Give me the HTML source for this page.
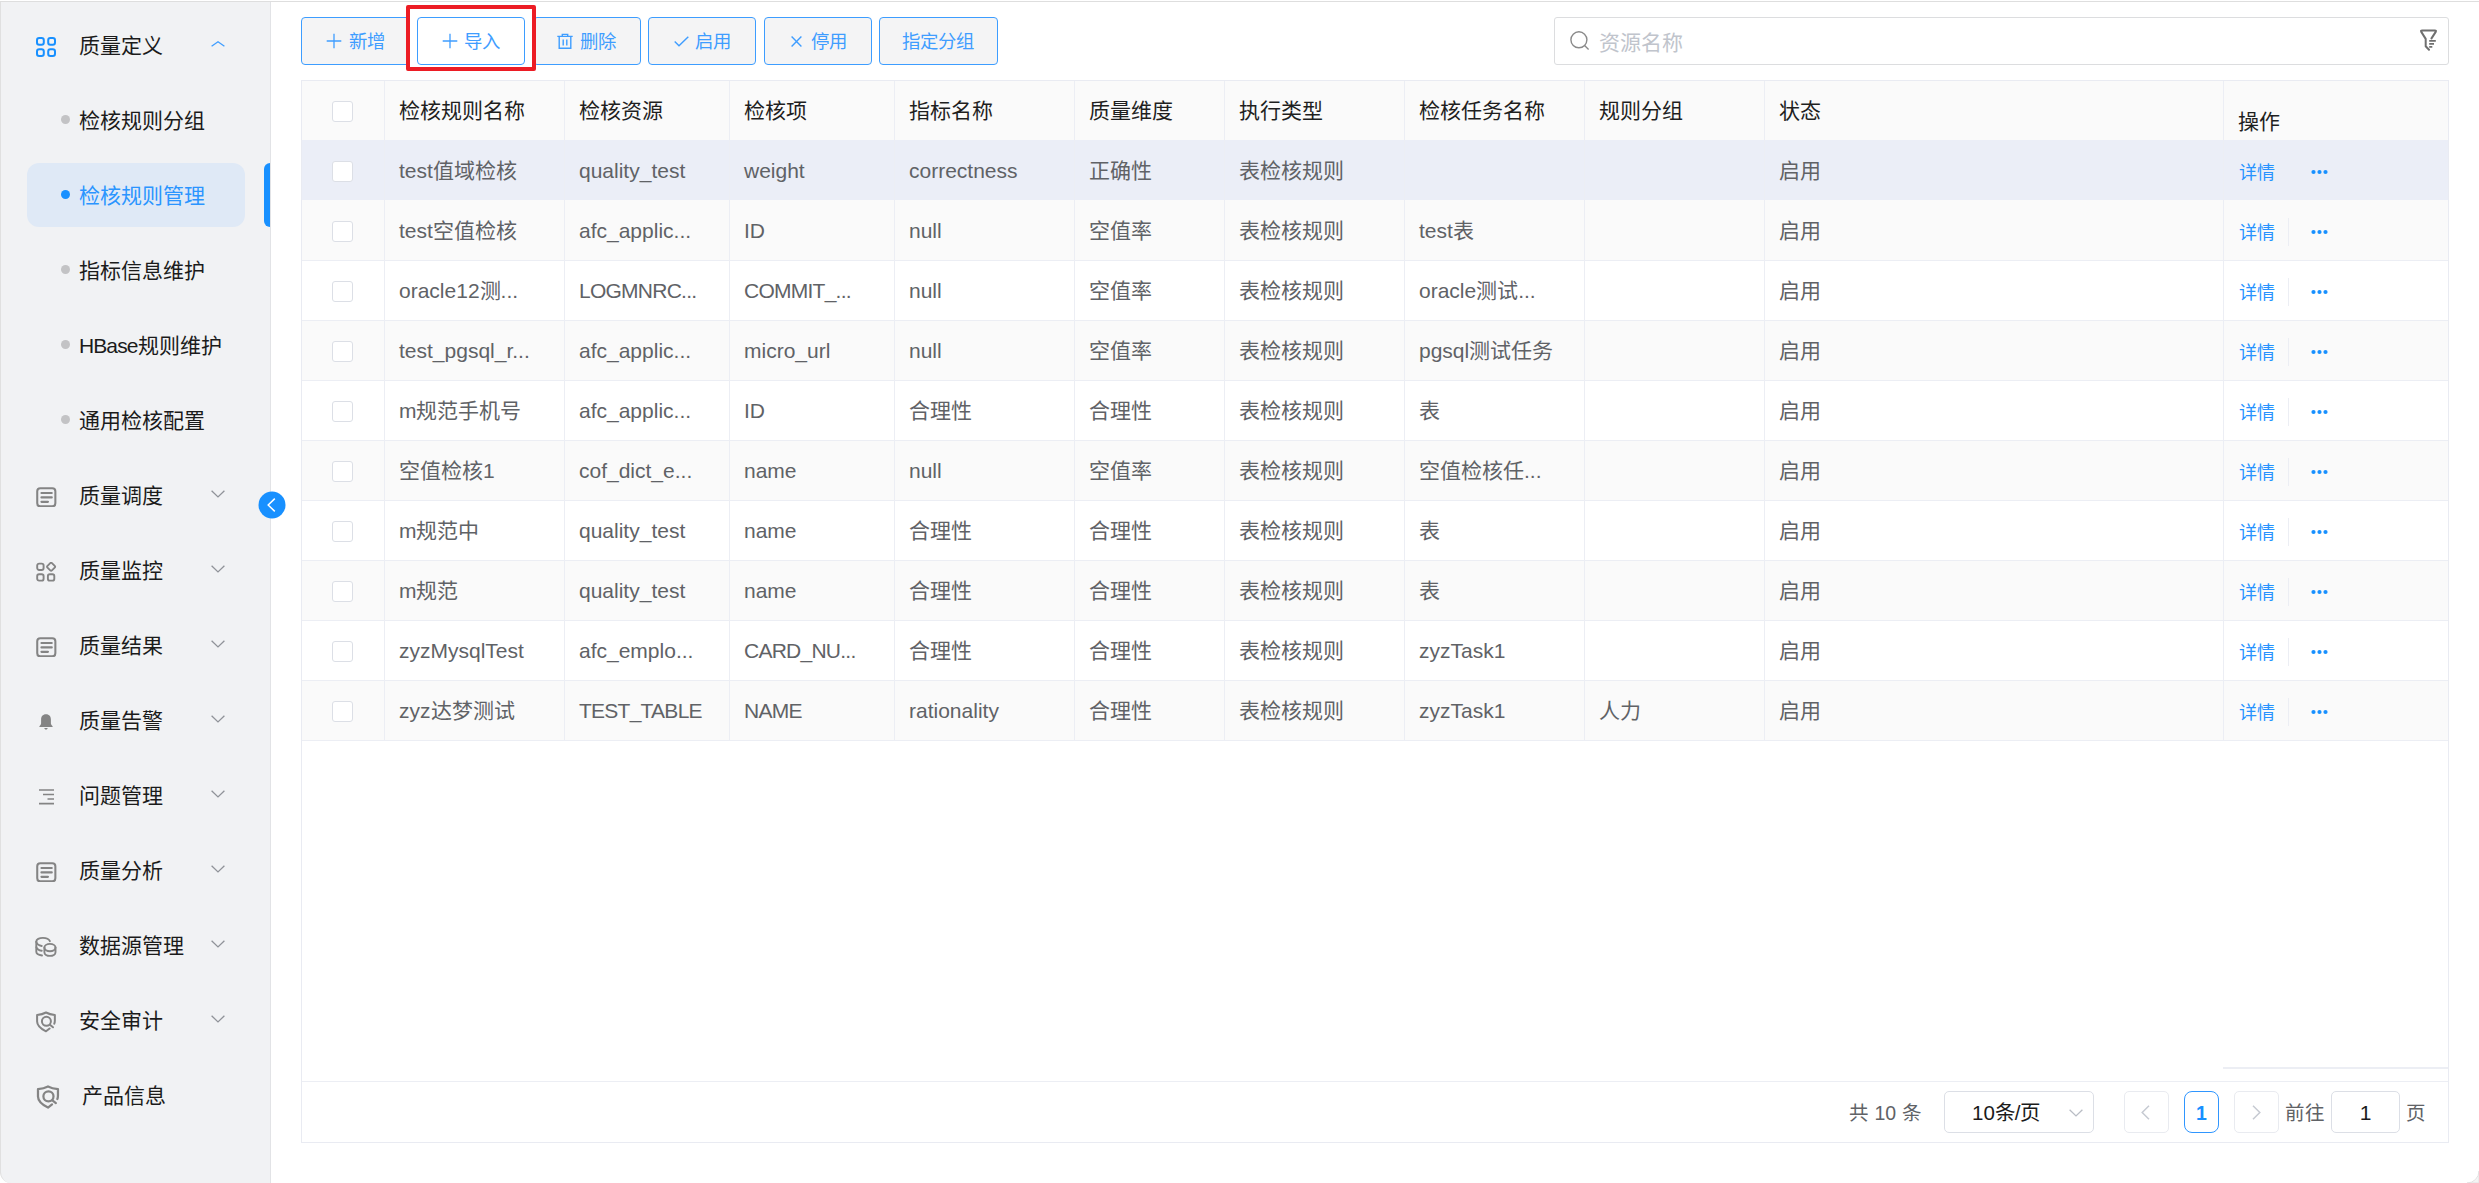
<!DOCTYPE html>
<html lang="zh-CN"><head><meta charset="utf-8"><title>检核规则管理</title>
<style>
*{box-sizing:border-box;margin:0;padding:0}
html,body{width:2479px;height:1183px;overflow:hidden;background:#fff}
body{position:relative;font-family:"Liberation Sans",sans-serif;font-size:21px;color:#606266}
.abs{position:absolute}
.side{left:0;top:2px;width:271px;height:1181px;background:#f1f2f4;border-left:1px solid #e0e0e0;border-right:1.5px solid #e2e3e6;border-bottom-left-radius:11px}
.topline{left:0;top:1px;width:2479px;height:1px;background:#dedede}
.mi{left:79px;height:30px;line-height:30px;font-size:21px;color:#1b1b1b;white-space:nowrap}
.dot{left:61px;width:9px;height:9px;border-radius:50%;background:#c3c3c5}
.btn{top:17px;height:48px;border:1.6px solid #3d9dff;border-radius:4px;background:#f4f4f5;color:#3f9dff;font-size:18.4px;line-height:46px;white-space:nowrap}
.btn span{position:absolute;top:1.3px}
.cell{height:60px;line-height:60px;white-space:nowrap;font-size:21px;color:#606266}
.hd{color:#1f1f1f;font-size:21px}
.vline{width:1.4px;background:#eceef4}
.hline{height:1.5px;background:#eceef4}
.cb{width:20.5px;height:20.5px;border:1.5px solid #dcdfe6;border-radius:3px;background:#fff;left:332px}
.lnk{color:#2893ff;font-size:18px;left:2239px;height:60px;line-height:60px}
.pg{font-size:19.5px;color:#606266;white-space:nowrap;height:42px;line-height:42px;top:1092.2px}
.box{border:1.5px solid #dcdfe6;border-radius:5px;background:#fff}
</style></head><body>
<div class="abs topline"></div>
<div class="abs side"></div>

<div class="abs" style="left:27px;top:163px;width:218px;height:64px;border-radius:12px;background:#dfe9f6"></div>
<div class="abs" style="left:264px;top:163px;width:6px;height:64px;border-radius:6px 0 0 6px;background:#1890ff"></div>
<div class="abs mi" style="top:31.2px;left:79px;color:#1b1b1b">质量定义</div>
<div class="abs mi" style="top:106.2px;left:79px;color:#1b1b1b">检核规则分组</div>
<div class="abs dot" style="top:115.4px;background:#c3c3c5"></div>
<div class="abs mi" style="top:181.2px;left:79px;color:#2b95ff">检核规则管理</div>
<div class="abs dot" style="top:190.4px;background:#1890ff"></div>
<div class="abs mi" style="top:256.2px;left:79px;color:#1b1b1b">指标信息维护</div>
<div class="abs dot" style="top:265.4px;background:#c3c3c5"></div>
<div class="abs mi" style="top:331.2px;left:79px;color:#1b1b1b"><span style="letter-spacing:-0.9px">HBase</span>规则维护</div>
<div class="abs dot" style="top:340.4px;background:#c3c3c5"></div>
<div class="abs mi" style="top:406.2px;left:79px;color:#1b1b1b">通用检核配置</div>
<div class="abs dot" style="top:415.4px;background:#c3c3c5"></div>
<div class="abs mi" style="top:481.2px;left:79px;color:#1b1b1b">质量调度</div>
<div class="abs mi" style="top:556.2px;left:79px;color:#1b1b1b">质量监控</div>
<div class="abs mi" style="top:631.2px;left:79px;color:#1b1b1b">质量结果</div>
<div class="abs mi" style="top:706.2px;left:79px;color:#1b1b1b">质量告警</div>
<div class="abs mi" style="top:781.2px;left:79px;color:#1b1b1b">问题管理</div>
<div class="abs mi" style="top:856.2px;left:79px;color:#1b1b1b">质量分析</div>
<div class="abs mi" style="top:931.2px;left:79px;color:#1b1b1b">数据源管理</div>
<div class="abs mi" style="top:1006.2px;left:79px;color:#1b1b1b">安全审计</div>
<div class="abs mi" style="top:1081.2px;left:82.2px;color:#1b1b1b">产品信息</div>
<svg class="abs" style="left:36px;top:37px" width="20" height="20" viewBox="0 0 20 20" fill="none"><rect x="1" y="1" width="6.8" height="6.8" rx="2.2" stroke="#1890ff" stroke-width="2"/><rect x="1" y="12.2" width="6.8" height="6.8" rx="2.2" stroke="#1890ff" stroke-width="2"/><rect x="12.2" y="1" width="6.8" height="6.8" rx="2.2" stroke="#1890ff" stroke-width="2"/><rect x="12.2" y="12.2" width="6.8" height="6.8" rx="2.2" stroke="#1890ff" stroke-width="2"/></svg>
<svg class="abs" style="left:211.3px;top:41px" width="14" height="6" viewBox="0 0 14 6" fill="none"><path d="M0.6 5.3L7 0.8L13.4 5.3" stroke="#409eff" stroke-width="1.3"/></svg>
<svg class="abs" style="left:36.1px;top:486.7px" width="20.6" height="20.6" viewBox="0 0 20 20" fill="none"><rect x="1.2" y="1.2" width="17.6" height="17.6" rx="3" stroke="#848484" stroke-width="2"/><path d="M5.3 5.8H15.3M5.3 10.1H15.3M5.3 14.4H11.6" stroke="#848484" stroke-width="2.1" stroke-linecap="round"/></svg>
<svg class="abs" style="left:35.6px;top:561.6px" width="21" height="21" viewBox="0 0 21 21" fill="none"><rect x="1.2" y="1.6" width="6.4" height="6.4" rx="1.9" stroke="#848484" stroke-width="1.9"/><rect x="1.2" y="12.2" width="6.4" height="6.4" rx="1.9" stroke="#848484" stroke-width="1.9"/><rect x="11.9" y="12.2" width="6.4" height="6.4" rx="1.9" stroke="#848484" stroke-width="1.9"/><rect x="11.95" y="1.65" width="6.3" height="6.3" rx="1.2" transform="rotate(45 15.1 4.8)" stroke="#848484" stroke-width="1.9"/></svg>
<svg class="abs" style="left:36.1px;top:636.7px" width="20.6" height="20.6" viewBox="0 0 20 20" fill="none"><rect x="1.2" y="1.2" width="17.6" height="17.6" rx="3" stroke="#848484" stroke-width="2"/><path d="M5.3 5.8H15.3M5.3 10.1H15.3M5.3 14.4H11.6" stroke="#848484" stroke-width="2.1" stroke-linecap="round"/></svg>
<svg class="abs" style="left:39px;top:714px" width="14" height="16" viewBox="0 0 14 16" fill="none"><path d="M7 0.3C10.4 0.3 11.9 2.7 11.9 5.6V9.2C11.9 10.4 12.6 11.2 13.6 12.3V13.1H0.4V12.3C1.4 11.2 2.1 10.4 2.1 9.2V5.6C2.1 2.7 3.6 0.3 7 0.3Z" fill="#848484"/><path d="M5.3 14h3.4c0 0.9-0.7 1.5-1.7 1.5s-1.7-0.6-1.7-1.5Z" fill="#848484"/></svg>
<svg class="abs" style="left:38.5px;top:789px" width="15" height="16" viewBox="0 0 15 16" fill="none"><path d="M0 1H15M4 5.5H15M8.5 10H15M0 14.6H15" stroke="#848484" stroke-width="1.6"/></svg>
<svg class="abs" style="left:36.1px;top:861.7px" width="20.6" height="20.6" viewBox="0 0 20 20" fill="none"><rect x="1.2" y="1.2" width="17.6" height="17.6" rx="3" stroke="#848484" stroke-width="2"/><path d="M5.3 5.8H15.3M5.3 10.1H15.3M5.3 14.4H11.6" stroke="#848484" stroke-width="2.1" stroke-linecap="round"/></svg>
<svg class="abs" style="left:30px;top:930px" width="32" height="32" viewBox="0 0 32 32"><path d="M6.3 11.6C6.3 9.3 9.2 7.85 12.9 7.85C16.3 7.85 19 9.1 19.9 11.2" stroke="#848484" stroke-width="1.9" stroke-linecap="round" fill="none"/><path d="M6.3 11.6V21.8C6.3 23.7 8.6 25 12 25.5" stroke="#848484" stroke-width="1.9" stroke-linecap="round" fill="none"/><path d="M6.4 12.3C7 14.2 9 15.5 11.7 16M6.4 17.2C7 19.1 9 20.3 11.7 20.8" stroke="#848484" stroke-width="1.9" stroke-linecap="round" fill="none"/><ellipse cx="19.95" cy="17.55" rx="5.55" ry="3.65" stroke="#848484" stroke-width="1.9" stroke-linecap="round" fill="none"/><path d="M14.4 17.55V22.2C14.4 24.3 16.9 25.9 19.95 25.9S25.5 24.3 25.5 22.2V17.55" stroke="#848484" stroke-width="1.9" stroke-linecap="round" fill="none"/></svg>
<svg class="abs" style="left:30px;top:1005px" width="32.0" height="32.0" viewBox="0 0 32 32"><path d="M19.6 23.5L16 26.3C10.3 23.4 7.1 20.6 7.1 16.4V9.9C10.6 9.6 13.4 8.9 16 7.5C18.6 8.9 21.4 9.6 24.85 9.9V15.5C24.85 16.7 24.7 17.7 24.3 18.7" stroke="#848484" stroke-width="2" stroke-linecap="round" stroke-linejoin="round" fill="none"/><circle cx="16.4" cy="16.3" r="4.5" stroke="#848484" stroke-width="2" stroke-linecap="round" stroke-linejoin="round" fill="none"/><path d="M19.9 19.8L23 22.3" stroke="#848484" stroke-width="2" stroke-linecap="round" stroke-linejoin="round" fill="none"/></svg>
<svg class="abs" style="left:30px;top:1077.9px" width="36.0" height="36.0" viewBox="0 0 32 32"><path d="M19.6 23.5L16 26.3C10.3 23.4 7.1 20.6 7.1 16.4V9.9C10.6 9.6 13.4 8.9 16 7.5C18.6 8.9 21.4 9.6 24.85 9.9V15.5C24.85 16.7 24.7 17.7 24.3 18.7" stroke="#848484" stroke-width="2" stroke-linecap="round" stroke-linejoin="round" fill="none"/><circle cx="16.4" cy="16.3" r="4.5" stroke="#848484" stroke-width="2" stroke-linecap="round" stroke-linejoin="round" fill="none"/><path d="M19.9 19.8L23 22.3" stroke="#848484" stroke-width="2" stroke-linecap="round" stroke-linejoin="round" fill="none"/></svg>
<svg class="abs" style="left:210.6px;top:489.8px" width="14" height="8" viewBox="0 0 14 8" fill="none"><path d="M0.6 0.7L7 6.9L13.4 0.7" stroke="#909399" stroke-width="1.3"/></svg>
<svg class="abs" style="left:210.6px;top:564.8px" width="14" height="8" viewBox="0 0 14 8" fill="none"><path d="M0.6 0.7L7 6.9L13.4 0.7" stroke="#909399" stroke-width="1.3"/></svg>
<svg class="abs" style="left:210.6px;top:639.8px" width="14" height="8" viewBox="0 0 14 8" fill="none"><path d="M0.6 0.7L7 6.9L13.4 0.7" stroke="#909399" stroke-width="1.3"/></svg>
<svg class="abs" style="left:210.6px;top:714.8px" width="14" height="8" viewBox="0 0 14 8" fill="none"><path d="M0.6 0.7L7 6.9L13.4 0.7" stroke="#909399" stroke-width="1.3"/></svg>
<svg class="abs" style="left:210.6px;top:789.8px" width="14" height="8" viewBox="0 0 14 8" fill="none"><path d="M0.6 0.7L7 6.9L13.4 0.7" stroke="#909399" stroke-width="1.3"/></svg>
<svg class="abs" style="left:210.6px;top:864.8px" width="14" height="8" viewBox="0 0 14 8" fill="none"><path d="M0.6 0.7L7 6.9L13.4 0.7" stroke="#909399" stroke-width="1.3"/></svg>
<svg class="abs" style="left:210.6px;top:939.8px" width="14" height="8" viewBox="0 0 14 8" fill="none"><path d="M0.6 0.7L7 6.9L13.4 0.7" stroke="#909399" stroke-width="1.3"/></svg>
<svg class="abs" style="left:210.6px;top:1014.8px" width="14" height="8" viewBox="0 0 14 8" fill="none"><path d="M0.6 0.7L7 6.9L13.4 0.7" stroke="#909399" stroke-width="1.3"/></svg>
<svg class="abs" style="left:257.9px;top:490.9px" width="28" height="28" viewBox="0 0 28 28" fill="none"><circle cx="14" cy="14" r="13.5" fill="#1890ff"/><path d="M16.8 7.6L10.2 14L16.8 20.4" stroke="#fff" stroke-width="1.5"/></svg>
<div class="abs btn" style="left:301px;width:110px"><span style="left:47px">新增</span></div>
<div class="abs btn" style="left:533px;width:108px"><span style="left:46px">删除</span></div>
<div class="abs btn" style="left:648px;width:108px"><span style="left:46px">启用</span></div>
<div class="abs btn" style="left:764px;width:108px"><span style="left:46px">停用</span></div>
<div class="abs btn" style="left:879px;width:119px"><span style="left:22px">指定分组</span></div>
<div class="abs" style="left:406.3px;top:5.2px;width:129.7px;height:66px;border:4px solid #ec1c24;border-radius:2px;background:#fff"></div>
<div class="abs btn" style="left:417px;width:108px;background:#fff"><span style="left:46px">导入</span></div>
<svg class="abs" style="left:325.5px;top:33.4px" width="16" height="16" viewBox="0 0 16 16" fill="none"><path d="M8 0.7V15.3M0.7 8H15.3" stroke="#3f9dff" stroke-width="1.3"/></svg>
<svg class="abs" style="left:441.5px;top:33.4px" width="16" height="16" viewBox="0 0 16 16" fill="none"><path d="M8 0.7V15.3M0.7 8H15.3" stroke="#3f9dff" stroke-width="1.3"/></svg>
<svg class="abs" style="left:557px;top:33px" width="16" height="16" viewBox="0 0 16 16" fill="none"><path d="M0.3 3.4H15.7M5.3 3.4V1.4H10.7V3.4M2.2 3.4V15.2H13.8V3.4M6.2 6.6V12.4M9.8 6.6V12.4" stroke="#3f9dff" stroke-width="1.4"/></svg>
<svg class="abs" style="left:673.5px;top:35.8px" width="15" height="11" viewBox="0 0 15 11" fill="none"><path d="M0.7 5.6L5 9.8L14.3 0.7" stroke="#3f9dff" stroke-width="1.4"/></svg>
<svg class="abs" style="left:790.8px;top:36.2px" width="11" height="11" viewBox="0 0 11 11" fill="none"><path d="M0.6 0.6L10.4 10.4M10.4 0.6L0.6 10.4" stroke="#3f9dff" stroke-width="1.4"/></svg>
<div class="abs box" style="left:1554px;top:17px;width:895px;height:48px;border-color:#dcdddf;border-radius:3px"></div>
<div class="abs" style="left:1599px;top:27.8px;font-size:21px;line-height:30px;color:#c0c4cc">资源名称</div>
<svg class="abs" style="left:1570px;top:30.5px" width="20" height="20" viewBox="0 0 20 20" fill="none"><circle cx="8.9" cy="8.8" r="8" stroke="#8a8a8a" stroke-width="1.4"/><path d="M14.6 14.6L18.6 18.4" stroke="#8a8a8a" stroke-width="1.4"/></svg>
<svg class="abs" style="left:2420px;top:28px" width="18" height="24" viewBox="0 0 18 24" fill="none"><path d="M9 21.7L5.7 18.3V10.9L1.3 3.9Q0.5 2.5 2.1 2.5H14.9Q16.5 2.5 15.7 3.9L11.5 10.4" stroke="#6f6f6f" stroke-width="2" stroke-linejoin="round" stroke-linecap="round" fill="none"/><path d="M9.2 12.9H15.8M9.2 15.9H14M9.2 18.8H12.3" stroke="#6f6f6f" stroke-width="1.8"/></svg>
<div class="abs" style="left:301px;top:80px;width:2148px;height:1063px;border:1.5px solid #e9ebf2"></div>
<div class="abs" style="left:302px;top:81px;width:2146px;height:59px;background:#fafafa"></div>
<div class="abs" style="left:302px;top:140px;width:2146px;height:60px;background:#ebeef7"></div>
<div class="abs" style="left:302px;top:200px;width:2146px;height:60px;background:#fafafa"></div>
<div class="abs" style="left:302px;top:260px;width:2146px;height:60px;background:#fff"></div>
<div class="abs" style="left:302px;top:320px;width:2146px;height:60px;background:#fafafa"></div>
<div class="abs" style="left:302px;top:380px;width:2146px;height:60px;background:#fff"></div>
<div class="abs" style="left:302px;top:440px;width:2146px;height:60px;background:#fafafa"></div>
<div class="abs" style="left:302px;top:500px;width:2146px;height:60px;background:#fff"></div>
<div class="abs" style="left:302px;top:560px;width:2146px;height:60px;background:#fafafa"></div>
<div class="abs" style="left:302px;top:620px;width:2146px;height:60px;background:#fff"></div>
<div class="abs" style="left:302px;top:680px;width:2146px;height:60px;background:#fafafa"></div>
<div class="abs hline" style="left:302px;top:259.5px;width:2146px"></div>
<div class="abs hline" style="left:302px;top:319.5px;width:2146px"></div>
<div class="abs hline" style="left:302px;top:379.5px;width:2146px"></div>
<div class="abs hline" style="left:302px;top:439.5px;width:2146px"></div>
<div class="abs hline" style="left:302px;top:499.5px;width:2146px"></div>
<div class="abs hline" style="left:302px;top:559.5px;width:2146px"></div>
<div class="abs hline" style="left:302px;top:619.5px;width:2146px"></div>
<div class="abs hline" style="left:302px;top:679.5px;width:2146px"></div>
<div class="abs hline" style="left:302px;top:739.5px;width:2146px"></div>
<div class="abs vline" style="left:383.65px;top:81px;height:659px"></div>
<div class="abs vline" style="left:563.65px;top:81px;height:659px"></div>
<div class="abs vline" style="left:728.65px;top:81px;height:659px"></div>
<div class="abs vline" style="left:893.65px;top:81px;height:659px"></div>
<div class="abs vline" style="left:1073.65px;top:81px;height:659px"></div>
<div class="abs vline" style="left:1223.65px;top:81px;height:659px"></div>
<div class="abs vline" style="left:1403.65px;top:81px;height:659px"></div>
<div class="abs vline" style="left:1583.65px;top:81px;height:659px"></div>
<div class="abs vline" style="left:1763.65px;top:81px;height:659px"></div>
<div class="abs vline" style="left:2222.65px;top:81px;height:659px"></div>
<div class="abs hline" style="left:302px;top:739.5px;width:2146px"></div>
<div class="abs hline" style="left:2223px;top:1066.8px;width:225px;height:2px"></div>
<div class="abs hline" style="left:302px;top:1080.6px;width:2146px;height:1.5px"></div>
<div class="abs cb" style="top:101.3px"></div>
<div class="abs cell hd" style="left:399px;top:81.4px">检核规则名称</div>
<div class="abs cell hd" style="left:579px;top:81.4px">检核资源</div>
<div class="abs cell hd" style="left:744px;top:81.4px">检核项</div>
<div class="abs cell hd" style="left:909px;top:81.4px">指标名称</div>
<div class="abs cell hd" style="left:1089px;top:81.4px">质量维度</div>
<div class="abs cell hd" style="left:1239px;top:81.4px">执行类型</div>
<div class="abs cell hd" style="left:1419px;top:81.4px">检核任务名称</div>
<div class="abs cell hd" style="left:1599px;top:81.4px">规则分组</div>
<div class="abs cell hd" style="left:1779px;top:81.4px">状态</div>
<div class="abs cell hd" style="left:2238px;top:92.4px">操作</div>
<div class="abs cb" style="top:161.3px"></div>
<div class="abs cell" style="left:399px;top:141.4px">test值域检核</div>
<div class="abs cell" style="left:579px;top:141.4px">quality_test</div>
<div class="abs cell" style="left:744px;top:141.4px">weight</div>
<div class="abs cell" style="left:909px;top:141.4px">correctness</div>
<div class="abs cell" style="left:1089px;top:141.4px">正确性</div>
<div class="abs cell" style="left:1239px;top:141.4px">表检核规则</div>
<div class="abs cell" style="left:1779px;top:141.4px">启用</div>
<div class="abs lnk" style="top:142.6px">详情</div>
<svg class="abs" style="left:2310.3px;top:166.5px" width="20" height="10" viewBox="0 0 20 10"><circle cx="3.5" cy="5" r="2.1" fill="#1890ff"/><circle cx="9.5" cy="5" r="2.1" fill="#1890ff"/><circle cx="15.5" cy="5" r="2.1" fill="#1890ff"/></svg>
<div class="abs cb" style="top:221.3px"></div>
<div class="abs cell" style="left:399px;top:201.4px">test空值检核</div>
<div class="abs cell" style="left:579px;top:201.4px">afc_applic...</div>
<div class="abs cell" style="left:744px;top:201.4px">ID</div>
<div class="abs cell" style="left:909px;top:201.4px">null</div>
<div class="abs cell" style="left:1089px;top:201.4px">空值率</div>
<div class="abs cell" style="left:1239px;top:201.4px">表检核规则</div>
<div class="abs cell" style="left:1419px;top:201.4px">test表</div>
<div class="abs cell" style="left:1779px;top:201.4px">启用</div>
<div class="abs lnk" style="top:202.6px">详情</div>
<div class="abs" style="left:2288.1px;top:217.5px;width:1.2px;height:28.5px;background:#eceef4"></div>
<svg class="abs" style="left:2310.3px;top:226.5px" width="20" height="10" viewBox="0 0 20 10"><circle cx="3.5" cy="5" r="2.1" fill="#1890ff"/><circle cx="9.5" cy="5" r="2.1" fill="#1890ff"/><circle cx="15.5" cy="5" r="2.1" fill="#1890ff"/></svg>
<div class="abs cb" style="top:281.3px"></div>
<div class="abs cell" style="left:399px;top:261.4px">oracle12测...</div>
<div class="abs cell" style="left:579px;top:261.4px;letter-spacing:-0.75px">LOGMNRC...</div>
<div class="abs cell" style="left:744px;top:261.4px;letter-spacing:-0.75px">COMMIT_...</div>
<div class="abs cell" style="left:909px;top:261.4px">null</div>
<div class="abs cell" style="left:1089px;top:261.4px">空值率</div>
<div class="abs cell" style="left:1239px;top:261.4px">表检核规则</div>
<div class="abs cell" style="left:1419px;top:261.4px">oracle测试...</div>
<div class="abs cell" style="left:1779px;top:261.4px">启用</div>
<div class="abs lnk" style="top:262.6px">详情</div>
<div class="abs" style="left:2288.1px;top:277.5px;width:1.2px;height:28.5px;background:#eceef4"></div>
<svg class="abs" style="left:2310.3px;top:286.5px" width="20" height="10" viewBox="0 0 20 10"><circle cx="3.5" cy="5" r="2.1" fill="#1890ff"/><circle cx="9.5" cy="5" r="2.1" fill="#1890ff"/><circle cx="15.5" cy="5" r="2.1" fill="#1890ff"/></svg>
<div class="abs cb" style="top:341.3px"></div>
<div class="abs cell" style="left:399px;top:321.4px">test_pgsql_r...</div>
<div class="abs cell" style="left:579px;top:321.4px">afc_applic...</div>
<div class="abs cell" style="left:744px;top:321.4px">micro_url</div>
<div class="abs cell" style="left:909px;top:321.4px">null</div>
<div class="abs cell" style="left:1089px;top:321.4px">空值率</div>
<div class="abs cell" style="left:1239px;top:321.4px">表检核规则</div>
<div class="abs cell" style="left:1419px;top:321.4px">pgsql测试任务</div>
<div class="abs cell" style="left:1779px;top:321.4px">启用</div>
<div class="abs lnk" style="top:322.6px">详情</div>
<div class="abs" style="left:2288.1px;top:337.5px;width:1.2px;height:28.5px;background:#eceef4"></div>
<svg class="abs" style="left:2310.3px;top:346.5px" width="20" height="10" viewBox="0 0 20 10"><circle cx="3.5" cy="5" r="2.1" fill="#1890ff"/><circle cx="9.5" cy="5" r="2.1" fill="#1890ff"/><circle cx="15.5" cy="5" r="2.1" fill="#1890ff"/></svg>
<div class="abs cb" style="top:401.3px"></div>
<div class="abs cell" style="left:399px;top:381.4px">m规范手机号</div>
<div class="abs cell" style="left:579px;top:381.4px">afc_applic...</div>
<div class="abs cell" style="left:744px;top:381.4px">ID</div>
<div class="abs cell" style="left:909px;top:381.4px">合理性</div>
<div class="abs cell" style="left:1089px;top:381.4px">合理性</div>
<div class="abs cell" style="left:1239px;top:381.4px">表检核规则</div>
<div class="abs cell" style="left:1419px;top:381.4px">表</div>
<div class="abs cell" style="left:1779px;top:381.4px">启用</div>
<div class="abs lnk" style="top:382.6px">详情</div>
<div class="abs" style="left:2288.1px;top:397.5px;width:1.2px;height:28.5px;background:#eceef4"></div>
<svg class="abs" style="left:2310.3px;top:406.5px" width="20" height="10" viewBox="0 0 20 10"><circle cx="3.5" cy="5" r="2.1" fill="#1890ff"/><circle cx="9.5" cy="5" r="2.1" fill="#1890ff"/><circle cx="15.5" cy="5" r="2.1" fill="#1890ff"/></svg>
<div class="abs cb" style="top:461.3px"></div>
<div class="abs cell" style="left:399px;top:441.4px">空值检核1</div>
<div class="abs cell" style="left:579px;top:441.4px">cof_dict_e...</div>
<div class="abs cell" style="left:744px;top:441.4px">name</div>
<div class="abs cell" style="left:909px;top:441.4px">null</div>
<div class="abs cell" style="left:1089px;top:441.4px">空值率</div>
<div class="abs cell" style="left:1239px;top:441.4px">表检核规则</div>
<div class="abs cell" style="left:1419px;top:441.4px">空值检核任...</div>
<div class="abs cell" style="left:1779px;top:441.4px">启用</div>
<div class="abs lnk" style="top:442.6px">详情</div>
<div class="abs" style="left:2288.1px;top:457.5px;width:1.2px;height:28.5px;background:#eceef4"></div>
<svg class="abs" style="left:2310.3px;top:466.5px" width="20" height="10" viewBox="0 0 20 10"><circle cx="3.5" cy="5" r="2.1" fill="#1890ff"/><circle cx="9.5" cy="5" r="2.1" fill="#1890ff"/><circle cx="15.5" cy="5" r="2.1" fill="#1890ff"/></svg>
<div class="abs cb" style="top:521.3px"></div>
<div class="abs cell" style="left:399px;top:501.4px">m规范中</div>
<div class="abs cell" style="left:579px;top:501.4px">quality_test</div>
<div class="abs cell" style="left:744px;top:501.4px">name</div>
<div class="abs cell" style="left:909px;top:501.4px">合理性</div>
<div class="abs cell" style="left:1089px;top:501.4px">合理性</div>
<div class="abs cell" style="left:1239px;top:501.4px">表检核规则</div>
<div class="abs cell" style="left:1419px;top:501.4px">表</div>
<div class="abs cell" style="left:1779px;top:501.4px">启用</div>
<div class="abs lnk" style="top:502.6px">详情</div>
<div class="abs" style="left:2288.1px;top:517.5px;width:1.2px;height:28.5px;background:#eceef4"></div>
<svg class="abs" style="left:2310.3px;top:526.5px" width="20" height="10" viewBox="0 0 20 10"><circle cx="3.5" cy="5" r="2.1" fill="#1890ff"/><circle cx="9.5" cy="5" r="2.1" fill="#1890ff"/><circle cx="15.5" cy="5" r="2.1" fill="#1890ff"/></svg>
<div class="abs cb" style="top:581.3px"></div>
<div class="abs cell" style="left:399px;top:561.4px">m规范</div>
<div class="abs cell" style="left:579px;top:561.4px">quality_test</div>
<div class="abs cell" style="left:744px;top:561.4px">name</div>
<div class="abs cell" style="left:909px;top:561.4px">合理性</div>
<div class="abs cell" style="left:1089px;top:561.4px">合理性</div>
<div class="abs cell" style="left:1239px;top:561.4px">表检核规则</div>
<div class="abs cell" style="left:1419px;top:561.4px">表</div>
<div class="abs cell" style="left:1779px;top:561.4px">启用</div>
<div class="abs lnk" style="top:562.6px">详情</div>
<div class="abs" style="left:2288.1px;top:577.5px;width:1.2px;height:28.5px;background:#eceef4"></div>
<svg class="abs" style="left:2310.3px;top:586.5px" width="20" height="10" viewBox="0 0 20 10"><circle cx="3.5" cy="5" r="2.1" fill="#1890ff"/><circle cx="9.5" cy="5" r="2.1" fill="#1890ff"/><circle cx="15.5" cy="5" r="2.1" fill="#1890ff"/></svg>
<div class="abs cb" style="top:641.3px"></div>
<div class="abs cell" style="left:399px;top:621.4px">zyzMysqlTest</div>
<div class="abs cell" style="left:579px;top:621.4px">afc_emplo...</div>
<div class="abs cell" style="left:744px;top:621.4px;letter-spacing:-0.75px">CARD_NU...</div>
<div class="abs cell" style="left:909px;top:621.4px">合理性</div>
<div class="abs cell" style="left:1089px;top:621.4px">合理性</div>
<div class="abs cell" style="left:1239px;top:621.4px">表检核规则</div>
<div class="abs cell" style="left:1419px;top:621.4px">zyzTask1</div>
<div class="abs cell" style="left:1779px;top:621.4px">启用</div>
<div class="abs lnk" style="top:622.6px">详情</div>
<div class="abs" style="left:2288.1px;top:637.5px;width:1.2px;height:28.5px;background:#eceef4"></div>
<svg class="abs" style="left:2310.3px;top:646.5px" width="20" height="10" viewBox="0 0 20 10"><circle cx="3.5" cy="5" r="2.1" fill="#1890ff"/><circle cx="9.5" cy="5" r="2.1" fill="#1890ff"/><circle cx="15.5" cy="5" r="2.1" fill="#1890ff"/></svg>
<div class="abs cb" style="top:701.3px"></div>
<div class="abs cell" style="left:399px;top:681.4px">zyz达梦测试</div>
<div class="abs cell" style="left:579px;top:681.4px;letter-spacing:-0.75px">TEST_TABLE</div>
<div class="abs cell" style="left:744px;top:681.4px;letter-spacing:-0.75px">NAME</div>
<div class="abs cell" style="left:909px;top:681.4px">rationality</div>
<div class="abs cell" style="left:1089px;top:681.4px">合理性</div>
<div class="abs cell" style="left:1239px;top:681.4px">表检核规则</div>
<div class="abs cell" style="left:1419px;top:681.4px">zyzTask1</div>
<div class="abs cell" style="left:1599px;top:681.4px">人力</div>
<div class="abs cell" style="left:1779px;top:681.4px">启用</div>
<div class="abs lnk" style="top:682.6px">详情</div>
<div class="abs" style="left:2288.1px;top:697.5px;width:1.2px;height:28.5px;background:#eceef4"></div>
<svg class="abs" style="left:2310.3px;top:706.5px" width="20" height="10" viewBox="0 0 20 10"><circle cx="3.5" cy="5" r="2.1" fill="#1890ff"/><circle cx="9.5" cy="5" r="2.1" fill="#1890ff"/><circle cx="15.5" cy="5" r="2.1" fill="#1890ff"/></svg>
<div class="abs pg" style="left:1849px">共 10 条</div>
<div class="abs box" style="left:1944px;top:1091px;width:150px;height:42px"></div>
<div class="abs pg" style="left:1972px;color:#1b1b1b;font-size:20.5px">10条/页</div>
<div class="abs box" style="left:2124px;top:1091px;width:45px;height:42px;border-color:#e9ebf0"></div>
<div class="abs box" style="left:2184px;top:1091px;width:35px;height:42px;border-color:#2f96ff;border-radius:8px"></div>
<div class="abs pg" style="left:2184px;width:35px;text-align:center;color:#1890ff;font-weight:bold">1</div>
<div class="abs box" style="left:2234px;top:1091px;width:45px;height:42px;border-color:#e9ebf0"></div>
<div class="abs pg" style="left:2285px">前往</div>
<div class="abs box" style="left:2331px;top:1091px;width:69px;height:42px"></div>
<div class="abs pg" style="left:2331px;width:69px;text-align:center;color:#1b1b1b;font-size:21px">1</div>
<div class="abs pg" style="left:2406px">页</div>
<svg class="abs" style="left:2141px;top:1105px" width="9" height="15" viewBox="0 0 9 15" fill="none"><path d="M8 0.8L1.2 7.5L8 14.2" stroke="#c6cad2" stroke-width="1.5"/></svg>
<svg class="abs" style="left:2252px;top:1105px" width="9" height="15" viewBox="0 0 9 15" fill="none"><path d="M1 0.8L7.8 7.5L1 14.2" stroke="#c6cad2" stroke-width="1.5"/></svg>
<svg class="abs" style="left:2069px;top:1108.8px" width="14" height="8" viewBox="0 0 14 8" fill="none"><path d="M0.6 0.7L7 6.9L13.4 0.7" stroke="#b9bdc5" stroke-width="1.3"/></svg>
<svg class="abs" style="left:2467px;top:1171px" width="12" height="12" viewBox="0 0 12 12"><path d="M12 0A12 12 0 0 1 0 12H12Z" fill="#f4f4f4" stroke="#e2e2e2" stroke-width="1"/></svg>
</body></html>
